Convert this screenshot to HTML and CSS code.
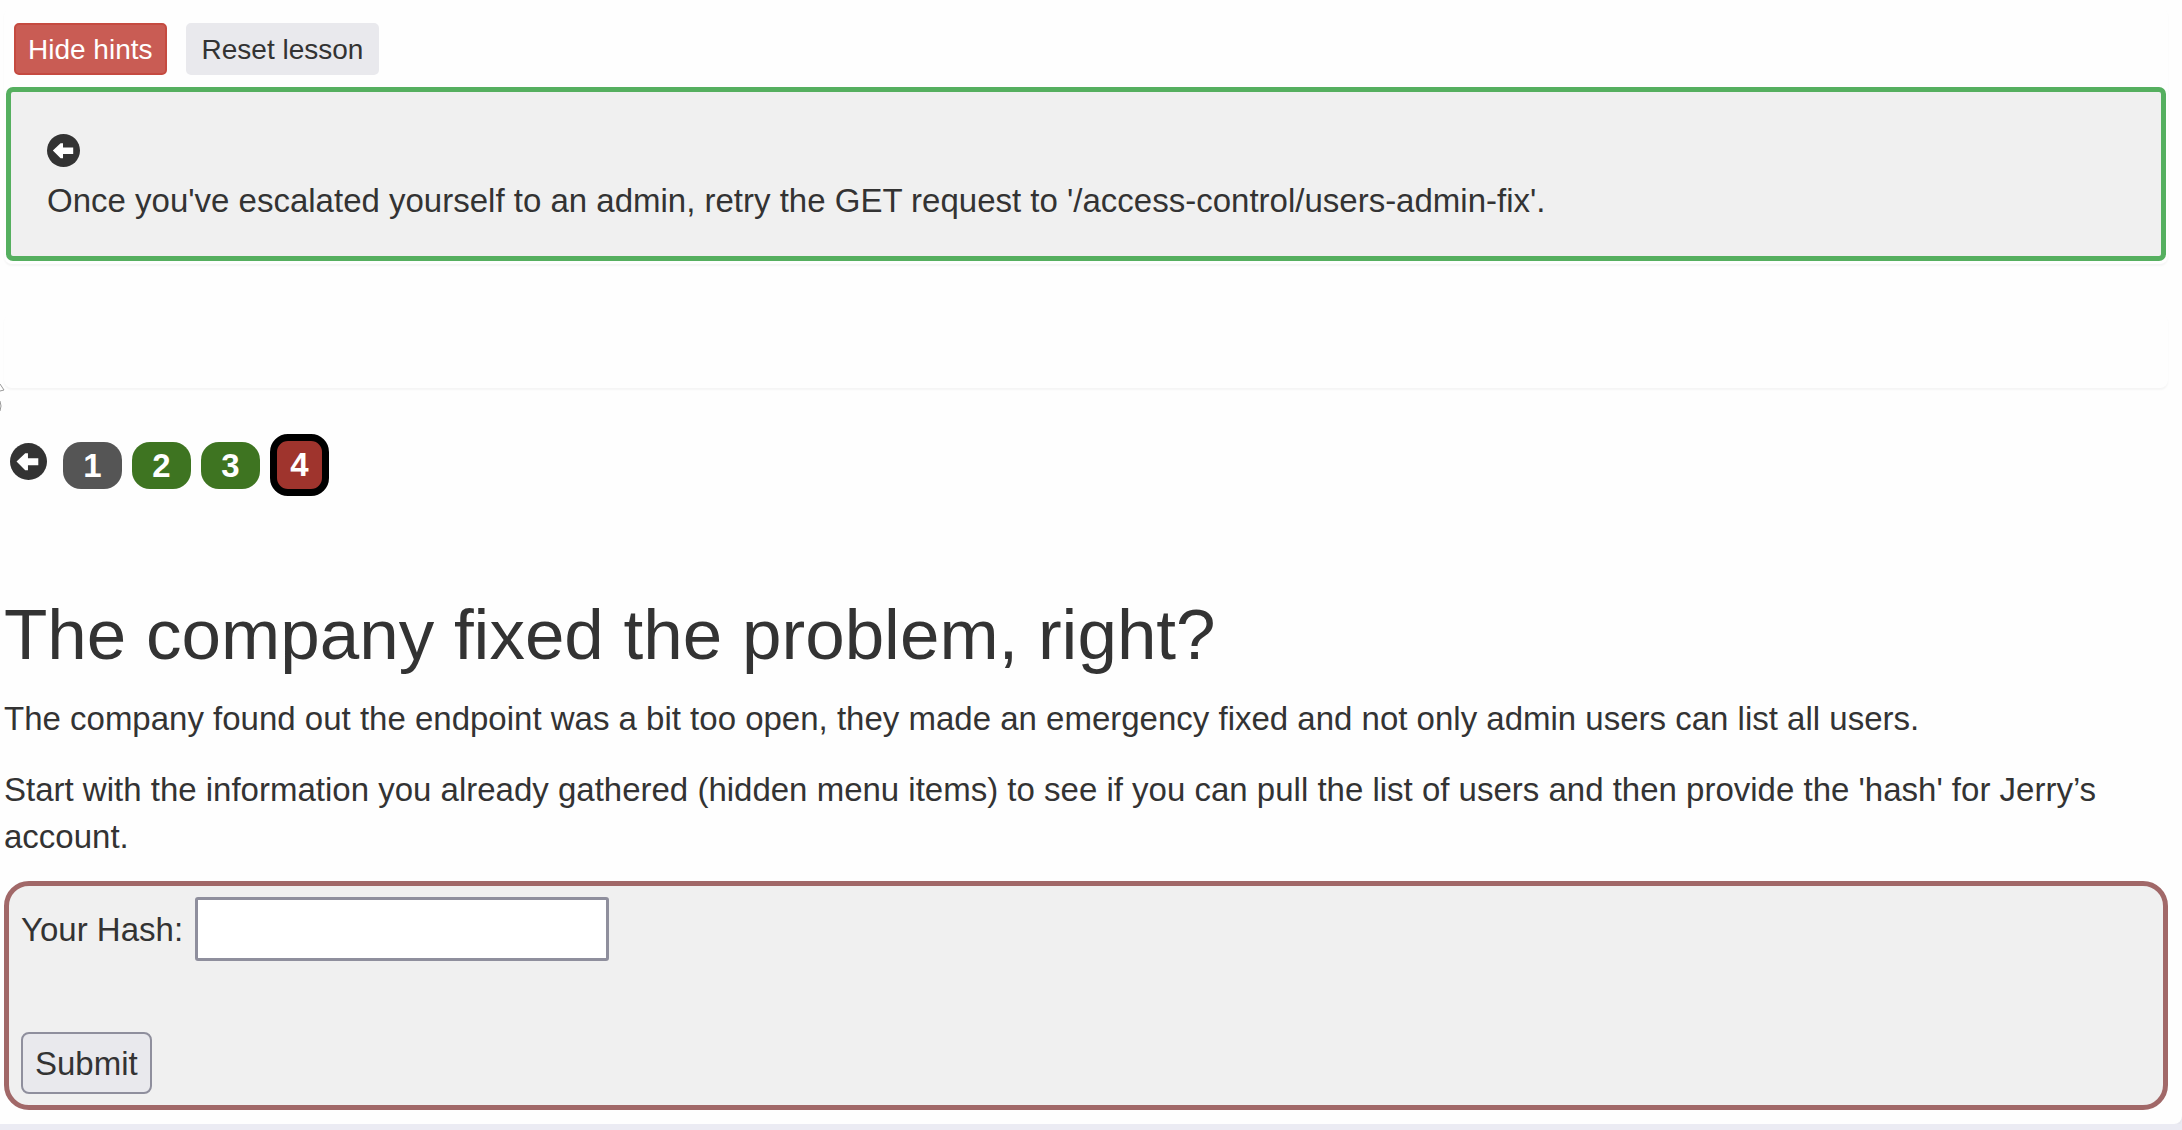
FILE: index.html
```html
<!DOCTYPE html>
<html lang="en">
<head>
<meta charset="utf-8">
<title>Missing Function Level Access Control</title>
<link rel="stylesheet" href="styles.css">
</head>
<body>
<main class="lesson">
  <svg class="edge-mark" viewBox="0 0 6 30" aria-hidden="true"><path d="M0 2 4 8 0 9M0 19Q2 24 0 29"/></svg>
  <section class="panel panel-hints">
    <div class="toolbar">
      <button type="button" class="btn btn-danger">Hide hints</button>
      <button type="button" class="btn">Reset lesson</button>
    </div>
    <div class="hint">
      <a href="#previous-hint" class="arrow" aria-label="Previous hint">
        <svg class="hint-icon" viewBox="0 0 34 34"><circle cx="17" cy="17" r="17"/><path d="M6 17 14 9.500h2.500v4.500H27v6.500H16.500V25H14z"/></svg>
      </a>
      <p class="hint-text">Once you've escalated yourself to an admin, retry the GET request to '/access-control/users-admin-fix'.</p>
    </div>
  </section>
  <div class="panel panel-empty"></div>
  <nav class="pages" aria-label="Lesson pages">
    <a href="#previous" class="arrow" aria-label="Previous page">
      <svg class="page-icon" viewBox="0 0 34 34"><circle cx="17" cy="17" r="17"/><path d="M6 17 14 9.500h2.500v4.500H26v6.500h-9.500V25H14z"/></svg>
    </a>
    <a href="#1" class="page">1</a>
    <a href="#2" class="page page-solved">2</a>
    <a href="#3" class="page page-solved">3</a>
    <a href="#4" class="page page-current" aria-current="page">4</a>
  </nav>
  <article class="content">
    <h1 class="title">The company fixed the problem, right?</h1>
    <p class="text">The company found out the endpoint was a bit too open, they made an emergency fixed and not only admin users can list all users.</p>
    <p class="text">Start with the information you already gathered (hidden menu items) to see if you can pull the list of users and then provide the 'hash' for Jerry’s account.</p>
    <form class="attack">
      <div class="field">
        <label for="hash">Your Hash:</label>
        <input id="hash" class="hash" type="text">
      </div>
      <button type="button" class="submit">Submit</button>
    </form>
  </article>
</main>
</body>
</html>
```
FILE: styles.css
```css
* { box-sizing: border-box; }

body {
  margin: 0;
  background: #ebebf3;
  color: #333;
  font-family: "Liberation Sans", Arial, sans-serif;
  font-size: 33px;
  line-height: 47px;
}

.lesson {
  position: relative;
  padding: 8px 14px 14px 4px;
  background: #fefefe;
  border-bottom-right-radius: 8px;
  box-shadow: 0 3px 0 #e7e7ee;
}

.edge-mark {
  position: absolute;
  top: 382px;
  left: 0;
  width: 6px;
  height: 30px;
  fill: none;
  stroke: #999;
}

.panel {
  background: #fefefe;
  border-radius: 8px;
  box-shadow: 0 2px 2px rgba(0, 0, 0, 0.04);
}

.panel-hints { padding: 15px 2px 3px; }

.panel-empty { height: 74px; margin-top: 50px; }

.toolbar {
  display: flex;
  gap: 19px;
  padding: 0 8px 12px;
}

.btn {
  height: 52px;
  padding: 2px 14px 0;
  border: 2px solid #e9e9ed;
  border-radius: 5px;
  background: #e9e9ed;
  color: #333;
  font: 28px/44px "Liberation Sans", Arial, sans-serif;
}

.btn-danger {
  padding: 2px 12px 0;
  border-color: #c54a40;
  background: #c95c54;
  color: #fff;
}

.hint {
  padding: 42px 36px 32px;
  border: 5px solid #55af5f;
  border-radius: 7px;
  background: #f0f0f0;
}

.arrow { display: block; }
.arrow circle { fill: #333; }
.arrow path { fill: #fff; }
.hint-icon { display: block; width: 33px; height: 33px; }
.page-icon { display: block; width: 37px; height: 37px; }

.hint-text { margin: 10px 0 0; }

.pages {
  display: flex;
  align-items: center;
  gap: 10px;
  padding: 46px 0 0 6px;
}

.pages .arrow { margin: 0 6px 8px 0; }

.page {
  width: 59px;
  height: 47px;
  border-radius: 18px;
  background: #555;
  color: #fff;
  font-weight: bold;
  text-align: center;
  text-decoration: none;
}

.page-solved { background: #3e7421; }

.page-current {
  height: 62px;
  border: 7px solid #000;
  background: #9f342d;
}

.title {
  margin: 99px 0 20px;
  font-size: 71px;
  font-weight: normal;
  line-height: 80px;
}

.text { margin: 0 0 24px; }

.text:last-of-type { margin-bottom: 21px; }

.attack {
  padding: 11px 12px;
  border: 5px solid #a16868;
  border-radius: 25px;
  background: #f0f0f0;
}

.field {
  display: flex;
  align-items: center;
  gap: 12px;
  margin-bottom: 71px;
}

.hash {
  width: 414px;
  height: 64px;
  padding: 2px 6px;
  border: 3px solid #8f8f9d;
  border-radius: 3px;
  background: #fff;
  font: inherit;
}

.submit {
  display: block;
  height: 62px;
  padding: 0 12px;
  border: 2px solid #8f8f9d;
  border-radius: 8px;
  background: #e9e9ed;
  color: #333;
  font: inherit;
}
```
